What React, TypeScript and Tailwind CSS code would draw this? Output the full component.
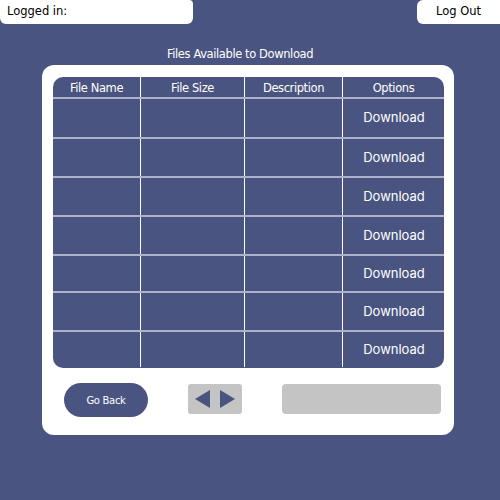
import React from "react";

const rows = [40, 39, 39, 39, 37, 39, 37];

export default function App() {
  const label = { fontFamily: '"DejaVu Sans", Verdana, sans-serif' };
  const inter = { fontFamily: 'Inter, "Liberation Sans", sans-serif' };
  return (
    <div className="w-[500px] h-[500px] bg-[#4a5480] flex flex-col overflow-hidden">
      <div className="flex justify-between h-[24px]">
        <div className="w-[193px] h-[24px] bg-white rounded-b-[6px] rounded-tr-[4px] flex items-center pl-[7px] text-[11.5px] text-black" style={label}>
          Logged in:
        </div>
        <div className="w-[83px] h-[24px] bg-white rounded-l-[6px] flex items-center justify-center text-[11.5px] text-black" style={label}>
          Log Out
        </div>
      </div>
      <div className="mt-[22px] h-[16px] leading-[16px] text-center text-white text-[11.5px] tracking-[-0.4px]" style={label}>
        <span className="mr-[20px]">Files Available to Download</span>
      </div>
      <div className="mt-[3px] ml-[42px] w-[412px] h-[370px] bg-white rounded-[12px] pt-[12px] pl-[11px] flex flex-col">
        <div className="w-[391px] h-[291px] bg-[#4a5480] rounded-[10px] overflow-hidden flex flex-col text-white">
          <div className="grid grid-cols-[88px_104px_98px_101px] h-[20px]">
            {["File Name", "File Size", "Description", "Options"].map((h, i) => (
              <div
                key={h}
                className={`flex items-center justify-center pt-[3px] text-[11.5px] tracking-[-0.4px] ${i < 3 ? "border-r border-white" : ""}`}
                style={label}
              >
                {h}
              </div>
            ))}
          </div>
          {rows.map((h, r) => (
            <div
              key={r}
              className="grid grid-cols-[88px_104px_98px_101px] border-t-2 border-[#aeb2c9]"
              style={{ height: h }}
            >
              <div className="border-r border-white" />
              <div className="border-r border-white" />
              <div className="border-r border-white" />
              <div className="flex items-center justify-center pl-[1px] text-[13px]" style={inter}>
                Download
              </div>
            </div>
          ))}
        </div>
        <div className="mt-[15px] flex items-start">
          <button className="ml-[11px] w-[84px] h-[34px] rounded-full bg-[#4a5480] text-white text-[10px] tracking-[-0.3px] flex items-center justify-center" style={label}>
            Go Back
          </button>
          <div className="ml-[40px] mt-[1px] w-[54px] h-[30px] bg-[#c4c4c4] rounded-[3px] flex items-center justify-center">
            <svg width="54" height="30" viewBox="0 0 54 30">
              <polygon points="7,15 22,6 22,24" fill="#4a5480" />
              <polygon points="32,6 32,24 47,15" fill="#4a5480" />
            </svg>
          </div>
          <div className="ml-[40px] mt-[1px] w-[159px] h-[30px] bg-[#c4c4c4] rounded-[4px]" />
        </div>
      </div>
    </div>
  );
}
